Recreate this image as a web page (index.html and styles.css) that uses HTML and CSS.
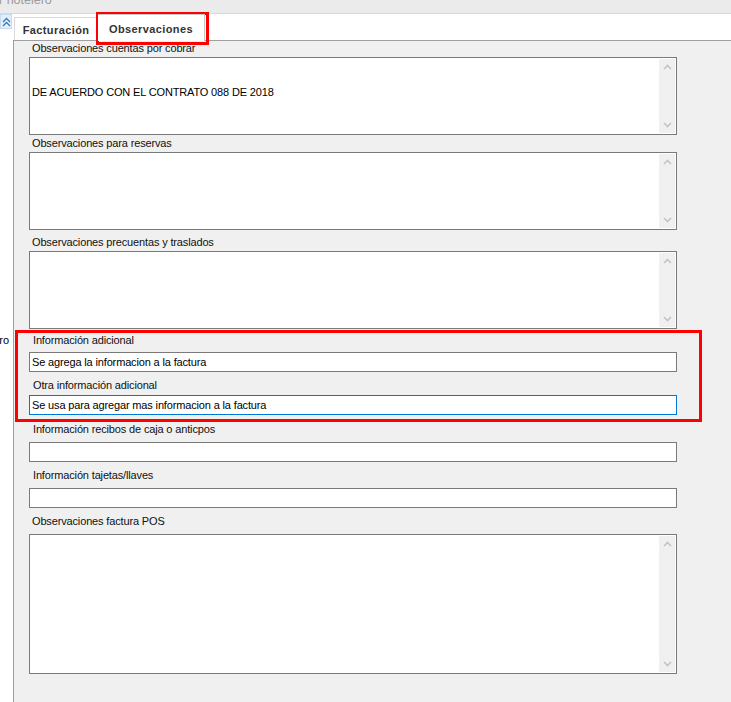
FILE: index.html
```html
<!DOCTYPE html>
<html lang="es">
<head>
    <meta charset="UTF-8">
    <title>Observaciones</title>
    <link rel="stylesheet" href="styles.css">
</head>
<body>
<div class="titlebar"><span class="title-text">r hotelero</span></div>
<div class="main">
    <aside class="side">
        <button class="collapse">
            <svg width="9" height="10" viewBox="0 0 9 10"><path d="M1 5 L4.5 1.5 L8 5 M1 9 L4.5 5.5 L8 9" fill="none" stroke="#3a78b8" stroke-width="1.3"/></svg>
        </button>
        <span class="side-label">ro</span>
    </aside>
    <div class="content">
        <div class="tabs">
            <div class="tab">Facturación</div>
            <div class="tab active">Observaciones</div>
        </div>
        <div class="panel">
            <div class="field">
                <label class="field-label memo-label">Observaciones cuentas por cobrar</label>
                <div class="memo">
                    <div class="memo-text"><br><br>DE ACUERDO CON EL CONTRATO 088 DE 2018</div>
                    <div class="memo-scroll">
                        <svg width="9" height="6" viewBox="0 0 9 6"><path d="M1 5 L4.5 1.5 L8 5" fill="none" stroke="#c4c4c4" stroke-width="1.6"/></svg>
                        <svg width="9" height="6" viewBox="0 0 9 6"><path d="M1 1 L4.5 4.5 L8 1" fill="none" stroke="#c4c4c4" stroke-width="1.6"/></svg>
                    </div>
                </div>
            </div>
            <div class="field gap-1">
                <label class="field-label memo-label">Observaciones para reservas</label>
                <div class="memo">
                    <div class="memo-text"></div>
                    <div class="memo-scroll">
                        <svg width="9" height="6" viewBox="0 0 9 6"><path d="M1 5 L4.5 1.5 L8 5" fill="none" stroke="#c4c4c4" stroke-width="1.6"/></svg>
                        <svg width="9" height="6" viewBox="0 0 9 6"><path d="M1 1 L4.5 4.5 L8 1" fill="none" stroke="#c4c4c4" stroke-width="1.6"/></svg>
                    </div>
                </div>
            </div>
            <div class="field gap-5">
                <label class="field-label memo-label">Observaciones precuentas y traslados</label>
                <div class="memo">
                    <div class="memo-text"></div>
                    <div class="memo-scroll">
                        <svg width="9" height="6" viewBox="0 0 9 6"><path d="M1 5 L4.5 1.5 L8 5" fill="none" stroke="#c4c4c4" stroke-width="1.6"/></svg>
                        <svg width="9" height="6" viewBox="0 0 9 6"><path d="M1 1 L4.5 4.5 L8 1" fill="none" stroke="#c4c4c4" stroke-width="1.6"/></svg>
                    </div>
                </div>
            </div>
            <div class="field gap-5">
                <label class="field-label line-label loose">Información adicional</label>
                <div class="line">Se agrega la informacion a la factura</div>
            </div>
            <div class="field gap-7">
                <label class="field-label line-label">Otra información adicional</label>
                <div class="line focused">Se usa para agregar mas informacion a la factura</div>
            </div>
            <div class="field gap-8">
                <label class="field-label line-label looser">Información recibos de caja o anticpos</label>
                <div class="line"></div>
            </div>
            <div class="field gap-7">
                <label class="field-label line-label looser">Información tajetas/llaves</label>
                <div class="line"></div>
            </div>
            <div class="field gap-7">
                <label class="field-label looser">Observaciones factura POS</label>
                <div class="memo tall">
                    <div class="memo-text"></div>
                    <div class="memo-scroll">
                        <svg width="9" height="6" viewBox="0 0 9 6"><path d="M1 5 L4.5 1.5 L8 5" fill="none" stroke="#c4c4c4" stroke-width="1.6"/></svg>
                        <svg width="9" height="6" viewBox="0 0 9 6"><path d="M1 1 L4.5 4.5 L8 1" fill="none" stroke="#c4c4c4" stroke-width="1.6"/></svg>
                    </div>
                </div>
            </div>
        </div>
    </div>
</div>
<!-- recuadros rojos -->
<div class="mark mark-tab"></div>
<div class="mark mark-info"></div>
</body>
</html>
```

FILE: styles.css
```css
*{
    padding:0;
    margin:0;
    box-sizing: border-box;
}
body{
    position: relative;
    width: 731px;
    height: 702px;
    overflow: hidden;
    background-color: #fff;
    font-family: "Liberation Sans", Arial, sans-serif;
    font-size: 11px;
    color: #000;
}
.titlebar{
    height: 14px;
    background-color: #ebebeb;
    border-bottom: 1px solid #d9d9d9;
    overflow: hidden;
}
.title-text{
    display: block;
    margin: -6px 0 0 -1px;
    font-size: 12.5px;
    line-height: 12px;
    color: #9b9b9b;
}
.main{
    display: flex;
    height: 688px;
}
.side{
    width: 13px;
    flex: none;
    display: flex;
    flex-direction: column;
}
.collapse{
    width: 12px;
    height: 15px;
    padding: 0;
    border: 1px solid #c3daf1;
    background-color: #e3effb;
    display: flex;
    align-items: center;
    justify-content: center;
}
.side-label{
    margin-top: 305px;
    height: 13px;
    line-height: 13px;
    padding-right: 4px;
    display: flex;
    justify-content: flex-end;
    overflow: hidden;
}
.content{
    flex: 1;
    display: flex;
    flex-direction: column;
}
.tabs{
    height: 26px;
    display: flex;
    align-items: flex-end;
    padding-left: 1px;
}
.tab{
    width: 84px;
    height: 23px;
    padding-top: 1px;
    border: 1px solid #d9d9d9;
    border-bottom: none;
    background-color: #fff;
    text-align: center;
    line-height: 22px;
    font-weight: bold;
    letter-spacing: 0.4px;
    color: #333;
}
.tab.active{
    position: relative;
    z-index: 1;
    width: 107px;
    height: 27px;
    margin-bottom: -1px;
    padding-top: 3px;
    border-left: none;
    border-color: #c8c8c8;
}
.panel{
    flex: 1;
    background-color: #f0f0f0;
    border-top: 1px solid #a0a0a0;
    border-left: 1px solid #a0a0a0;
    padding-left: 15px;
    letter-spacing: -0.15px;
}
.field.gap-1{
    margin-top: 1px;
}
.field.gap-5{
    margin-top: 5px;
}
.field.gap-7{
    margin-top: 7px;
}
.field.gap-8{
    margin-top: 8px;
}
.field-label{
    display: block;
    height: 13px;
    line-height: 13px;
    padding-left: 3px;
    margin-bottom: 3px;
    color: #111;
}
.memo-label{
    height: 14px;
    padding-top: 1px;
    margin-bottom: 2px;
}
.line-label{
    padding-left: 4px;
}
.field-label.loose{
    margin-bottom: 5px;
}
.field-label.looser{
    margin-bottom: 6px;
}
.memo{
    display: flex;
    width: 648px;
    height: 78px;
    border: 1px solid #7a7a7a;
    background-color: #fff;
}
.memo.tall{
    height: 140px;
}
.memo-text{
    flex: 1;
    padding: 2px 2px;
    line-height: 13px;
}
.memo-scroll{
    width: 16px;
    margin: 1px;
    padding: 5px 0;
    background-color: #f0f0f0;
    display: flex;
    flex-direction: column;
    justify-content: space-between;
    align-items: center;
}
.line{
    width: 648px;
    height: 20px;
    border: 1px solid #7a7a7a;
    background-color: #fff;
    padding: 0 2px;
    line-height: 18px;
}
.line.focused{
    border-color: #0078d7;
}
.mark{
    position: absolute;
    border: 3px solid #f00;
}
.mark-tab{
    left: 96px;
    top: 12px;
    width: 113px;
    height: 33px;
}
.mark-info{
    left: 15px;
    top: 330px;
    width: 687px;
    height: 92px;
}
```
